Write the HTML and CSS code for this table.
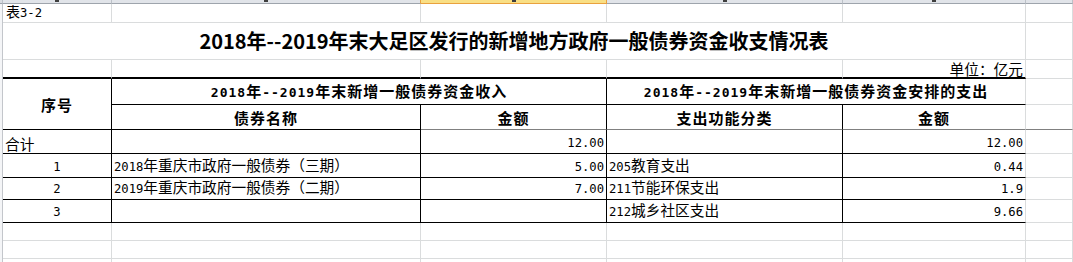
FILE: index.html
```html
<!DOCTYPE html>
<html lang="zh-CN">
<head>
<meta charset="utf-8">
<title>2018年--2019年末大足区发行的新增地方政府一般债券资金收支情况表</title>
<link rel="stylesheet" href="styles.css">
</head>
<body>
<div class="sheet">
  <div class="gutter"></div>

  <div class="hd corner"></div>
  <div class="hd"><span class="mk"></span></div>
  <div class="hd pre"><span class="mk"></span></div>
  <div class="hd sel"><span class="mk"></span></div>
  <div class="hd"><span class="mk"></span></div>
  <div class="hd"><span class="mk"></span></div>
  <div class="hd"></div>

  <div class="c small"><span>表<span class="n">3-2</span></span></div>
  <div class="c"></div>
  <div class="c"></div>
  <div class="c"></div>
  <div class="c"></div>
  <div class="c"></div>

  <div class="c title span5"><span>2018年--2019年末大足区发行的新增地方政府一般债券资金收支情况表</span></div>
  <div class="c"></div>

  <div class="c tb"></div>
  <div class="c tb"></div>
  <div class="c tb"></div>
  <div class="c tb"></div>
  <div class="c tb right unit"><span>单位：亿元</span></div>
  <div class="c"></div>

  <div class="c th rk bb rows2"><span>序号</span></div>
  <div class="c th rk bb span2"><span><span class="tn">2018</span>年<span class="tn">--2019</span>年末新增一般债券资金收入</span></div>
  <div class="c th bb span2"><span><span class="tn">2018</span>年<span class="tn">--2019</span>年末新增一般债券资金安排的支出</span></div>
  <div class="c"></div>

  <div class="c th rk bb"><span>债券名称</span></div>
  <div class="c th rk fz"><span>金额</span></div>
  <div class="c th rk fz"><span>支出功能分类</span></div>
  <div class="c th fz"><span>金额</span></div>
  <div class="c fz"></div>

  <div class="c rk bb"><span>合计</span></div>
  <div class="c rk bb"></div>
  <div class="c rk bb right"><span class="n">12.00</span></div>
  <div class="c rk bb"></div>
  <div class="c bb right"><span class="n">12.00</span></div>
  <div class="c"></div>

  <div class="c rk bb center"><span class="n">1</span></div>
  <div class="c rk bb"><span><span class="n">2018</span>年重庆市政府一般债券（三期）</span></div>
  <div class="c rk bb right"><span class="n">5.00</span></div>
  <div class="c rk bb"><span><span class="n">205</span>教育支出</span></div>
  <div class="c bb right"><span class="n">0.44</span></div>
  <div class="c"></div>

  <div class="c rk bb center"><span class="n">2</span></div>
  <div class="c rk bb"><span><span class="n">2019</span>年重庆市政府一般债券（二期）</span></div>
  <div class="c rk bb right"><span class="n">7.00</span></div>
  <div class="c rk bb"><span><span class="n">211</span>节能环保支出</span></div>
  <div class="c bb right"><span class="n">1.9</span></div>
  <div class="c"></div>

  <div class="c rk bb center"><span class="n">3</span></div>
  <div class="c rk bb"></div>
  <div class="c rk bb right"></div>
  <div class="c rk bb"><span><span class="n">212</span>城乡社区支出</span></div>
  <div class="c bb right"><span class="n">9.66</span></div>
  <div class="c"></div>

  <div class="c"></div><div class="c"></div><div class="c"></div><div class="c"></div><div class="c"></div><div class="c"></div>
  <div class="c"></div><div class="c"></div><div class="c"></div><div class="c"></div><div class="c"></div><div class="c"></div>
  <div class="c"></div><div class="c"></div><div class="c"></div><div class="c"></div><div class="c"></div><div class="c"></div>
</div>
</body>
</html>
```

FILE: styles.css
```css
html, body {
  margin: 0;
  padding: 0;
  background: #ffffff;
  overflow: hidden;
}

.sheet {
  width: 1073px;
  height: 262px;
  overflow: hidden;
  display: grid;
  grid-template-columns: 3px 109px 309px 186px 236px 183px 1fr;
  grid-template-rows: 4px 19px 37px 19px 26px 25px 24px 24px 22px 23px 18px 18px 18px;
  font-family: "Noto Sans CJK SC", sans-serif;
  font-size: 14.7px;
  color: #000;
}

.gutter {
  grid-column: 1;
  grid-row: 2 / -1;
  border-right: 1px solid #c3c6cb;
  background: #f4f5f7;
}

.hd {
  box-sizing: border-box;
  background: #e1e4e9;
  border-right: 1px solid #bcc1c8;
  border-bottom: 1px solid #9ea4ac;
  display: flex;
  justify-content: center;
  align-items: flex-start;
}
.hd.corner { background: #d9dce1; }
.hd.pre { border-right-color: #e9a13e; }
.hd.sel {
  background: #f9df85;
  border-right-color: #e9a13e;
  border-bottom-color: #e9a13e;
}
.mk {
  display: block;
  width: 4px;
  height: 2px;
  background: #3e3e3e;
}

.c {
  box-sizing: border-box;
  border-right: 1px solid #dadcdd;
  border-bottom: 1px solid #dadcdd;
  display: flex;
  align-items: flex-end;
  padding: 0 2px 1px 2px;
  white-space: nowrap;
  line-height: 17px;
}

.small { font-size: 14px; padding-left: 3px; padding-bottom: 0; line-height: 17px; }

.n {
  font-family: "DejaVu Sans Mono", monospace;
  font-size: 12.2px;
}
.tn {
  font-family: "DejaVu Sans Mono", monospace;
  font-size: 13px;
  letter-spacing: 1px;
}

.span5 { grid-column: span 5; }
.span2 { grid-column: span 2; }
.rows2 { grid-row: span 2; }

.title {
  justify-content: center;
  align-items: center;
  font-size: 20px;
  font-weight: 700;
  padding: 0;
  line-height: 26px;
}

.tb { border-bottom: 2px solid #000; }
.rk { border-right-color: #000; }
.bb { border-bottom-color: #000; }
.fz { border-bottom-color: #808080; }

.right { justify-content: flex-end; padding-right: 2px; }
.center { justify-content: center; }
.unit { padding-bottom: 0; line-height: 17px; }

.th {
  justify-content: center;
  align-items: center;
  font-weight: 700;
  font-size: 15px;
  letter-spacing: 1px;
  padding: 0;
}
```
